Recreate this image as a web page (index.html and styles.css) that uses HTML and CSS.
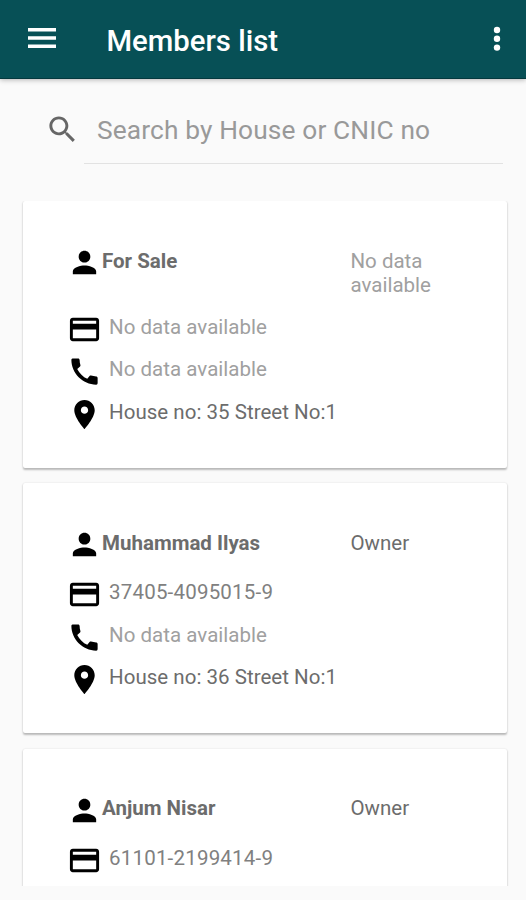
FILE: index.html
```html
<!DOCTYPE html>
<html lang="en">
<head>
<meta charset="utf-8">
<title>Members list</title>
<link rel="stylesheet" href="styles.css">
</head>
<body>
<svg class="sprite" aria-hidden="true">
  <symbol id="person" viewBox="0 0 24 24"><path d="M12 12c2.21 0 4-1.79 4-4s-1.79-4-4-4-4 1.79-4 4 1.79 4 4 4zm0 2c-2.67 0-8 1.34-8 4v2h16v-2c0-2.66-5.33-4-8-4z"/></symbol>
  <symbol id="card" viewBox="0 0 24 24"><path d="M20 4H4c-1.11 0-1.99.89-1.99 2L2 18c0 1.11.89 2 2 2h16c1.11 0 2-.89 2-2V6c0-1.11-.89-2-2-2zm0 14H4v-6h16v6zm0-10H4V6h16v2z"/></symbol>
  <symbol id="phone" viewBox="0 0 24 24"><path d="M20.01 15.38c-1.23 0-2.42-.2-3.53-.56-.35-.12-.74-.03-1.01.24l-1.57 1.97c-2.83-1.35-5.48-3.9-6.89-6.83l1.95-1.66c.27-.28.35-.67.24-1.02-.37-1.11-.56-2.3-.56-3.53 0-.54-.45-.99-.99-.99H4.19C3.65 3 3 3.24 3 3.99 3 13.28 10.73 21 20.01 21c.71 0 .99-.63.99-1.18v-3.45c0-.54-.45-.99-.99-.99z"/></symbol>
  <symbol id="pin" viewBox="0 0 24 24"><path d="M12 2C8.13 2 5 5.13 5 9c0 5.25 7 13 7 13s7-7.75 7-13c0-3.87-3.13-7-7-7zm0 9.500c-1.380 0-2.500-1.120-2.500-2.500s1.120-2.500 2.500-2.500 2.500 1.120 2.500 2.500-1.120 2.500-2.500 2.500z"/></symbol>
</svg>

<header class="appbar">
  <svg class="menu" viewBox="0 0 28 20"><path d="M0 0h28v3.500H0zM0 8.200h28v3.500H0zM0 16.500h28V20H0z"/></svg>
  <h1 class="title">Members list</h1>
  <svg class="more" viewBox="0 0 8 26"><circle cx="4" cy="4" r="3.200"/><circle cx="4" cy="12.800" r="3.200"/><circle cx="4" cy="21.600" r="3.200"/></svg>
</header>

<div class="search">
  <svg class="icon" viewBox="0 0 24 24"><path d="M15.500 14h-.79l-.28-.27C15.410 12.590 16 11.110 16 9.500 16 5.910 13.090 3 9.500 3S3 5.910 3 9.500 5.910 16 9.500 16c1.610 0 3.090-.59 4.230-1.570l.27.28v.79l5 4.990L20.490 19l-4.990-5zm-6 0C7.010 14 5 11.990 5 9.500S7.010 5 9.500 5 14 7.010 14 9.500 11.990 14 9.500 14z"/></svg>
  <div class="field">Search by House or CNIC no</div>
</div>

<main class="list">
  <article class="member">
    <div class="head tall"><svg class="icon"><use href="#person"/></svg><h2 class="name">For Sale</h2><div class="role hint">No data available</div></div>
    <div class="row"><svg class="icon"><use href="#card"/></svg><span class="hint">No data available</span></div>
    <div class="row"><svg class="icon"><use href="#phone"/></svg><span class="hint">No data available</span></div>
    <div class="row"><svg class="icon"><use href="#pin"/></svg><span class="house">House no: 35 Street No:1</span></div>
  </article>
  <article class="member">
    <div class="head"><svg class="icon"><use href="#person"/></svg><h2 class="name">Muhammad Ilyas</h2><div class="role">Owner</div></div>
    <div class="row"><svg class="icon"><use href="#card"/></svg><span class="number">37405-4095015-9</span></div>
    <div class="row"><svg class="icon"><use href="#phone"/></svg><span class="hint">No data available</span></div>
    <div class="row"><svg class="icon"><use href="#pin"/></svg><span class="house">House no: 36 Street No:1</span></div>
  </article>
  <article class="member">
    <div class="head"><svg class="icon"><use href="#person"/></svg><h2 class="name">Anjum Nisar</h2><div class="role">Owner</div></div>
    <div class="row"><svg class="icon"><use href="#card"/></svg><span class="number">61101-2199414-9</span></div>
  </article>
</main>
</body>
</html>
```
FILE: styles.css
```css
* { box-sizing: border-box; }
body {
  margin: 0;
  height: 900px;
  overflow: hidden;
  background: #fafafa;
  font-family: Roboto, "Liberation Sans", sans-serif;
  font-size: 20.5px;
  line-height: 24px;
  color: #6c6c6c;
}
.sprite { display: none; }
.icon { width: 35px; height: 35px; flex: none; }

.appbar {
  display: flex;
  align-items: center;
  height: 79px;
  padding: 0 25px 2px 27.500px;
  background: #075056;
  border-bottom: 1px solid #04393e;
  box-shadow: 0 1px 5px rgba(0, 0, 0, .28);
  fill: #fff;
  color: #fff;
}
.menu { width: 28px; height: 20px; }
.title {
  flex: 1;
  margin: 5px 0 0 51px;
  font-size: 29.300px;
  line-height: 36px;
  font-weight: 500;
}
.more { width: 8px; height: 26px; margin-top: 2px; }

.search {
  display: flex;
  height: 122px;
  padding: 33px 23px 0 44.500px;
  fill: #666;
}
.field {
  flex: 1;
  height: 51.500px;
  margin-left: 4.500px;
  padding: 3px 0 0 13px;
  border-bottom: 1px solid #e2e2e2;
  font-size: 26.300px;
  line-height: 30px;
  letter-spacing: .13px;
  color: #999;
}

.list {
  display: flex;
  flex-direction: column;
  gap: 15.500px;
  height: 685px;
  padding: 0 19px 0 23px;
  overflow: hidden;
}
.member {
  flex: none;
  min-height: 250px;
  padding: 44px 24px 28.500px 43.500px;
  background: #fff;
  border-radius: 2px;
  box-shadow: 0 1.500px 2px rgba(0, 0, 0, .25), 0 0 2px rgba(0, 0, 0, .08);
}
.head {
  display: flex;
  height: 50px;
}
.head.tall { height: 66.500px; }
.name {
  width: 248.500px;
  margin: 3.500px 0 0 .5px;
  font-size: 20.500px;
  line-height: 24px;
  font-weight: 700;
  color: #6c6c6c;
}
.role { width: 105px; margin-top: 3.500px; }
.row {
  display: flex;
  height: 42.500px;
}
.row span { margin: 3px 0 0 7.500px; letter-spacing: .03px; }
.row .number { color: #808080; letter-spacing: .2px; }
.hint, .row .hint { color: #a0a0a0; }
```
